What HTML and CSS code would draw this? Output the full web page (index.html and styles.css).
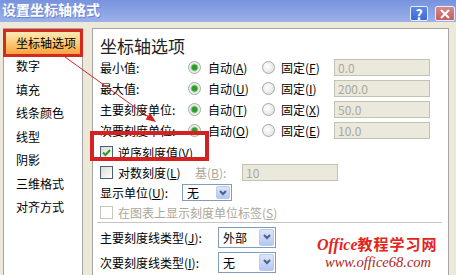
FILE: index.html
```html
<!DOCTYPE html>
<html lang="zh-CN">
<head>
    <meta charset="UTF-8">
    <title>设置坐标轴格式</title>
    <link rel="stylesheet" href="styles.css">
</head>
<body>
    <div class="dialog">
        <div class="titlebar">
            <span class="title">设置坐标轴格式</span>
            <span class="tb-btn help">?</span>
            <span class="tb-btn close">
                <svg width="10" height="10" viewBox="0 0 10 10"><path d="M1 1L9 9M9 1L1 9" stroke="#fff" stroke-width="2"/></svg>
            </span>
        </div>

        <div class="main">
            <ul class="nav">
                <li class="sel">坐标轴选项</li>
                <li>数字</li>
                <li>填充</li>
                <li>线条颜色</li>
                <li>线型</li>
                <li>阴影</li>
                <li>三维格式</li>
                <li>对齐方式</li>
            </ul>

            <div class="panel">
                <h2>坐标轴选项</h2>

                <div class="row">
                    <span class="lbl">最小值:</span>
                    <span class="opt"><i class="radio on"></i>自动(<u>A</u>)</span>
                    <span class="opt opt2"><i class="radio"></i>固定(<u>F</u>)</span>
                    <span class="field">0.0</span>
                </div>
                <div class="row">
                    <span class="lbl">最大值:</span>
                    <span class="opt"><i class="radio on"></i>自动(<u>U</u>)</span>
                    <span class="opt opt2"><i class="radio"></i>固定(<u>I</u>)</span>
                    <span class="field">200.0</span>
                </div>
                <div class="row">
                    <span class="lbl">主要刻度单位:</span>
                    <span class="opt"><i class="radio on"></i>自动(<u>T</u>)</span>
                    <span class="opt opt2"><i class="radio"></i>固定(<u>X</u>)</span>
                    <span class="field">50.0</span>
                </div>
                <div class="row">
                    <span class="lbl">次要刻度单位:</span>
                    <span class="opt"><i class="radio on"></i>自动(<u>O</u>)</span>
                    <span class="opt opt2"><i class="radio"></i>固定(<u>E</u>)</span>
                    <span class="field">10.0</span>
                </div>

                <div class="row row-rev">
                    <i class="check">
                        <svg width="11" height="11" viewBox="0 0 11 11"><path d="M2 5.5L4.5 8L9 3" fill="none" stroke="#21a121" stroke-width="2"/></svg>
                    </i>
                    逆序刻度值(<u>V</u>)
                </div>
                <div class="row row-log">
                    <span class="log-opt"><i class="check"></i>对数刻度(<u>L</u>)</span>
                    <span class="base-lbl">基(<u>B</u>):</span>
                    <span class="field">10</span>
                </div>
                <div class="row row-unit">
                    <span class="lbl-unit">显示单位(<u>U</u>):</span>
                    <span class="select small"><span class="val">无</span><span class="drop"><svg width="8" height="6" viewBox="0 0 8 6"><path d="M1 1L4 4L7 1" fill="none" stroke="#4d6185" stroke-width="2"/></svg></span></span>
                </div>
                <div class="row row-label disabled">
                    <i class="check off"></i>在图表上显示刻度单位标签(<u>S</u>)
                </div>

                <div class="sep"></div>

                <div class="row row-tick">
                    <span class="lbl-tick">主要刻度线类型(<u>J</u>):</span>
                    <span class="select"><span class="val">外部</span><span class="drop"><svg width="8" height="6" viewBox="0 0 8 6"><path d="M1 1L4 4L7 1" fill="none" stroke="#4d6185" stroke-width="2"/></svg></span></span>
                </div>
                <div class="row row-tick2">
                    <span class="lbl-tick">次要刻度线类型(<u>I</u>):</span>
                    <span class="select"><span class="val">无</span><span class="drop"><svg width="8" height="6" viewBox="0 0 8 6"><path d="M1 1L4 4L7 1" fill="none" stroke="#4d6185" stroke-width="2"/></svg></span></span>
                </div>
            </div>
        </div>

        <!-- annotations on top of the screenshot -->
        <div class="callout"></div>
        <svg class="arrow" width="456" height="275" viewBox="0 0 456 275">
            <line x1="65" y1="57" x2="150" y2="118" stroke="#d42222" stroke-width="1"/>
            <polygon points="156,122 150.2,112.9 145.5,119.5" fill="#d42222"/>
        </svg>
        <div class="watermark">
            <div class="wm-top"><span class="wm-en">Office</span><span class="wm-cn">教程学习网</span></div>
            <div class="wm-url">www.office68.com</div>
        </div>
    </div>
</body>
</html>
```

FILE: styles.css
```css
body {
    margin: 0;
    padding: 0;
    background-color: #ece9d8;
    font-family: "Noto Sans CJK SC", sans-serif;
    font-size: 12px;
    color: #000;
}

.dialog {
    position: relative;
    width: 456px;
    height: 275px;
    overflow: hidden;
}

.titlebar {
    height: 22px;
    display: flex;
    align-items: flex-start;
    padding: 0 1px 0 2px;
    background: linear-gradient(#7793dc, #9cb1e9);
}

.title {
    color: #fff;
    font-size: 14px;
    font-weight: bold;
    line-height: 18px;
    text-shadow: 1px 1px 0 #6a84cc;
}

.tb-btn {
    margin-top: 6px;
    height: 15px;
    box-sizing: border-box;
    border: 1px solid #e8eefc;
    border-radius: 2px;
    display: flex;
    align-items: center;
    justify-content: center;
    color: #fff;
    font-weight: bold;
    font-size: 14px;
}

.help {
    margin-left: auto;
    width: 18px;
    background: linear-gradient(#5a8ae8, #3c6bd6);
}

.close {
    margin-left: 7px;
    width: 20px;
    background: linear-gradient(#d68a8a, #c25e5e);
}

.main {
    display: flex;
    gap: 9px;
    padding: 6px 0 0 3px;
}

.nav {
    list-style: none;
    margin: 0;
    padding: 0;
    width: 80px;
    height: 260px;
    box-sizing: border-box;
    background: #fff;
    border: 1px solid #a5a5a5;
}

.nav li {
    height: 23.5px;
    line-height: 23.5px;
    padding-left: 12px;
}

.nav li.sel {
    height: 28px;
    line-height: 22px;
    margin: 0 -1px -3px;
    padding-left: 10px;
    box-sizing: border-box;
    border: 3px solid #d42a1e;
    background: linear-gradient(#fde9b4, #fbc870 55%, #f7a240);
}

.panel {
    width: 357px;
    height: 260px;
    box-sizing: border-box;
    background: #fff;
    border: 1px solid #a5a5a5;
    padding-left: 7px;
}

.panel h2 {
    margin: 0;
    padding-top: 5px;
    font-size: 17px;
    font-weight: normal;
    line-height: 23px;
    color: #222;
}

.row {
    display: flex;
    align-items: center;
    height: 21px;
    white-space: nowrap;
}

.lbl {
    width: 86px;
}

.opt {
    width: 75px;
    display: flex;
    align-items: center;
}

.opt .radio {
    margin: 0 7px 0 2px;
}

.opt2 {
    width: 73px;
}

.opt2 .radio {
    margin: 0 6px 0 1px;
}

.radio {
    display: inline-block;
    width: 13px;
    height: 13px;
    box-sizing: border-box;
    border-radius: 50%;
    border: 1px solid #a3a9b0;
    background: radial-gradient(circle at 40% 40%, #fff, #dcdcd4);
}

.radio.on {
    background: radial-gradient(circle, #2f9c2f 0 2.5px, #a8d8a0 3.5px, #f4f4ee 4.5px, #d8d8d0 100%);
}

.field {
    width: 96px;
    height: 17px;
    box-sizing: border-box;
    border: 1px solid #c3c1b4;
    background: #ebe9dc;
    color: #a9a89c;
    padding-left: 3px;
    line-height: 15px;
}

.check {
    display: inline-flex;
    align-items: center;
    justify-content: center;
    width: 13px;
    height: 13px;
    box-sizing: border-box;
    border: 1px solid #4a6078;
    background: linear-gradient(135deg, #dcdcd4, #fff);
    margin-right: 5px;
}

.check.off {
    border-color: #cac8bc;
    background: #fff;
}

.row-rev {
    height: 22px;
}

.row-log {
    height: 19px;
}

.log-opt {
    width: 95px;
    display: flex;
    align-items: center;
}

.base-lbl {
    width: 47px;
    color: #aca899;
}

.lbl-unit {
    width: 82px;
}

.disabled {
    color: #aca899;
}

.row-label {
    height: 19px;
}

.select {
    display: flex;
    width: 58px;
    height: 21px;
    box-sizing: border-box;
    border: 1px solid #7f9db9;
    background: #fff;
    padding: 1px;
}

.select.small {
    width: 50px;
    height: 17px;
}

.select .val {
    padding-left: 3px;
    line-height: 17px;
}

.select.small .val {
    line-height: 13px;
}

.drop {
    margin-left: auto;
    width: 15px;
    box-sizing: border-box;
    border: 1px solid #b9c9ef;
    border-radius: 2px;
    background: linear-gradient(#dce6fc, #b4c7f3);
    display: flex;
    align-items: center;
    justify-content: center;
}

.small .drop {
    width: 14px;
}

.sep {
    border-top: 1px solid #c5c5c5;
    margin: 0 6px 1px -3px;
}

.lbl-tick {
    width: 118px;
}

.row-tick {
    height: 26px;
}

.row-tick2 {
    height: 24px;
}

.callout {
    position: absolute;
    left: 90px;
    top: 131px;
    width: 119px;
    height: 30px;
    box-sizing: border-box;
    border: 4px solid #d42222;
}

.arrow {
    position: absolute;
    left: 0;
    top: 0;
}

.watermark {
    position: absolute;
    left: 317px;
    top: 234px;
    white-space: nowrap;
}

.wm-top {
    height: 18px;
    font-size: 16px;
    line-height: 18px;
    font-weight: bold;
    color: #e4241c;
}

.wm-en {
    font-family: "Liberation Serif", serif;
    font-style: italic;
}

.wm-cn {
    font-size: 15px;
    letter-spacing: 1px;
}

.wm-url {
    margin: 3px 0 0 8px;
    font-family: "Liberation Serif", serif;
    font-style: italic;
    font-size: 14.5px;
    line-height: 14px;
    color: #b0221c;
}
```
